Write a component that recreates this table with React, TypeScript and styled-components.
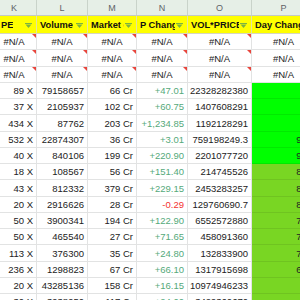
import React from "react";
import styled, { createGlobalStyle } from "styled-components";

const GlobalStyle = createGlobalStyle`
  html, body {
    margin: 0;
    padding: 0;
    background: #ffffff;
  }
  body {
    font-family: "Liberation Sans", Arial, sans-serif;
  }
`;

const COLS = "45px 51px 49px 51px 64px 64px";

type Tone = "bright" | "lime" | undefined;

const rows: {
  pe: string;
  vol: string;
  cap: string;
  chg: string;
  vp: string;
  day: string;
  tone?: Tone;
}[] = [
  { pe: "89 X", vol: "79158657", cap: "66 Cr", chg: "+47.01", vp: "22328282380", day: "99", tone: "bright" },
  { pe: "37 X", vol: "2105937", cap: "102 Cr", chg: "+60.75", vp: "1407608291", day: "98", tone: "bright" },
  { pe: "434 X", vol: "87762", cap: "203 Cr", chg: "+1,234.85", vp: "1192128291", day: "97", tone: "bright" },
  { pe: "532 X", vol: "22874307", cap: "36 Cr", chg: "+3.01", vp: "759198249.3", day: "921", tone: "bright" },
  { pe: "40 X", vol: "840106", cap: "199 Cr", chg: "+220.90", vp: "2201077720", day: "904", tone: "bright" },
  { pe: "18 X", vol: "108567", cap: "56 Cr", chg: "+151.40", vp: "214745526", day: "876", tone: "lime" },
  { pe: "43 X", vol: "812332", cap: "379 Cr", chg: "+229.15", vp: "2453283257", day: "853", tone: "lime" },
  { pe: "20 X", vol: "2916626", cap: "28 Cr", chg: "-0.29", vp: "129760690.7", day: "812", tone: "lime" },
  { pe: "50 X", vol: "3900341", cap: "194 Cr", chg: "+122.90", vp: "6552572880", day: "789", tone: "lime" },
  { pe: "50 X", vol: "465540", cap: "27 Cr", chg: "+71.65", vp: "458091360", day: "754", tone: "lime" },
  { pe: "113 X", vol: "376300", cap: "35 Cr", chg: "+24.80", vp: "132833900", day: "721", tone: "lime" },
  { pe: "236 X", vol: "1298823", cap: "67 Cr", chg: "+66.10", vp: "1317915698", day: "688", tone: "lime" },
  { pe: "20 X", vol: "43285136", cap: "158 Cr", chg: "+16.15", vp: "10974946233", day: "59", tone: "lime" },
  { pe: "30 X", vol: "3938950", cap: "117 Cr", chg: "+24.00", vp: "3429360670", day: "57", tone: "lime" },
];

const headers = [
  { letter: "K", title: "PE" },
  { letter: "L", title: "Volume" },
  { letter: "M", title: "Market cap" },
  { letter: "N", title: "P Change" },
  { letter: "O", title: "VOL*PRICE" },
  { letter: "P", title: "Day Change" },
];

const Sheet = styled.div`
  width: 300px;
  height: 300px;
  overflow: hidden;
  background: #ffffff;
`;

const Grid = styled.div`
  margin-left: -8px;
  width: 324px;
`;

const Row = styled.div<{ $h: number }>`
  display: grid;
  grid-template-columns: ${COLS};
  height: ${(p) => p.$h}px;
`;

const LetterCell = styled.div`
  box-sizing: border-box;
  display: flex;
  align-items: center;
  justify-content: center;
  background: #e6efe7;
  border-right: 1px solid #c9d3ca;
  border-bottom: 1px solid #c4c9c5;
  color: #5f6368;
  font-size: 9px;
`;

const HeadCell = styled.div`
  position: relative;
  box-sizing: border-box;
  display: flex;
  align-items: center;
  background: #ffff00;
  border-right: 1px solid #e3e3a0;
  border-bottom: 1px solid #d6d6c0;
  font-size: 9.3px;
  font-weight: bold;
  color: #111111;
`;

const HeadText = styled.span<{ $pad: number }>`
  display: block;
  overflow: hidden;
  white-space: nowrap;
  padding-left: ${(p) => p.$pad}px;
  margin-right: 12px;
`;

const Funnel = styled.svg`
  position: absolute;
  right: 4px;
  top: 7px;
`;

const Cell = styled.div<{ $align?: "left" | "right" | "center"; $color?: string; $fill?: Tone }>`
  position: relative;
  box-sizing: border-box;
  display: flex;
  align-items: flex-end;
  justify-content: ${(p) =>
    p.$align === "center" ? "center" : p.$align === "left" ? "flex-start" : "flex-end"};
  padding: 0 3px 2px 3px;
  background: ${(p) =>
    p.$fill === "bright" ? "#00ff00" : p.$fill === "lime" ? "#79d623" : "#ffffff"};
  border-right: 1px solid ${(p) => (p.$fill ? "rgba(0,0,0,0.06)" : "#e2e3e3")};
  border-bottom: 1px solid ${(p) => (p.$fill ? "rgba(0,0,0,0.08)" : "#e2e3e3")};
  color: ${(p) => p.$color ?? "#222222"};
  font-size: 9.5px;
  line-height: 11px;
  white-space: nowrap;
  overflow: hidden;
`;

const ErrorMark = styled.span`
  position: absolute;
  top: 0;
  right: 0;
  width: 0;
  height: 0;
  border-top: 4px solid #e8453c;
  border-left: 4px solid transparent;
`;

const ROW_H = 16.25;

function FilterIcon() {
  return (
    <Funnel width="7" height="5" viewBox="0 0 7 5">
      <rect x="0" y="0" width="7" height="1" fill="#7cb342" />
      <polygon points="0.5,1.6 6.5,1.6 3.5,5" fill="#7cb342" />
    </Funnel>
  );
}

function ErrorRow() {
  return (
    <Row $h={ROW_H}>
      {headers.map((h, i) => (
        <Cell key={h.letter} $align="center">
          #N/A
          {i < 5 && <ErrorMark />}
        </Cell>
      ))}
    </Row>
  );
}

export default function App() {
  return (
    <Sheet>
      <GlobalStyle />
      <Grid>
        <Row $h={16}>
          {headers.map((h) => (
            <LetterCell key={h.letter}>{h.letter}</LetterCell>
          ))}
        </Row>
        <Row $h={18}>
          {headers.map((h, i) => (
            <HeadCell key={h.letter}>
              <HeadText $pad={i === 0 ? 9 : 3}>{h.title}</HeadText>
              <FilterIcon />
            </HeadCell>
          ))}
        </Row>
        <ErrorRow />
        <ErrorRow />
        <ErrorRow />
        {rows.map((r, i) => (
          <Row key={i} $h={ROW_H}>
            <Cell>{r.pe}</Cell>
            <Cell>{r.vol}</Cell>
            <Cell>{r.cap}</Cell>
            <Cell $color={r.chg.startsWith("-") ? "#f4312f" : "#55a97a"}>{r.chg}</Cell>
            <Cell>{r.vp}</Cell>
            <Cell $fill={r.tone}>{r.day}</Cell>
          </Row>
        ))}
      </Grid>
    </Sheet>
  );
}
